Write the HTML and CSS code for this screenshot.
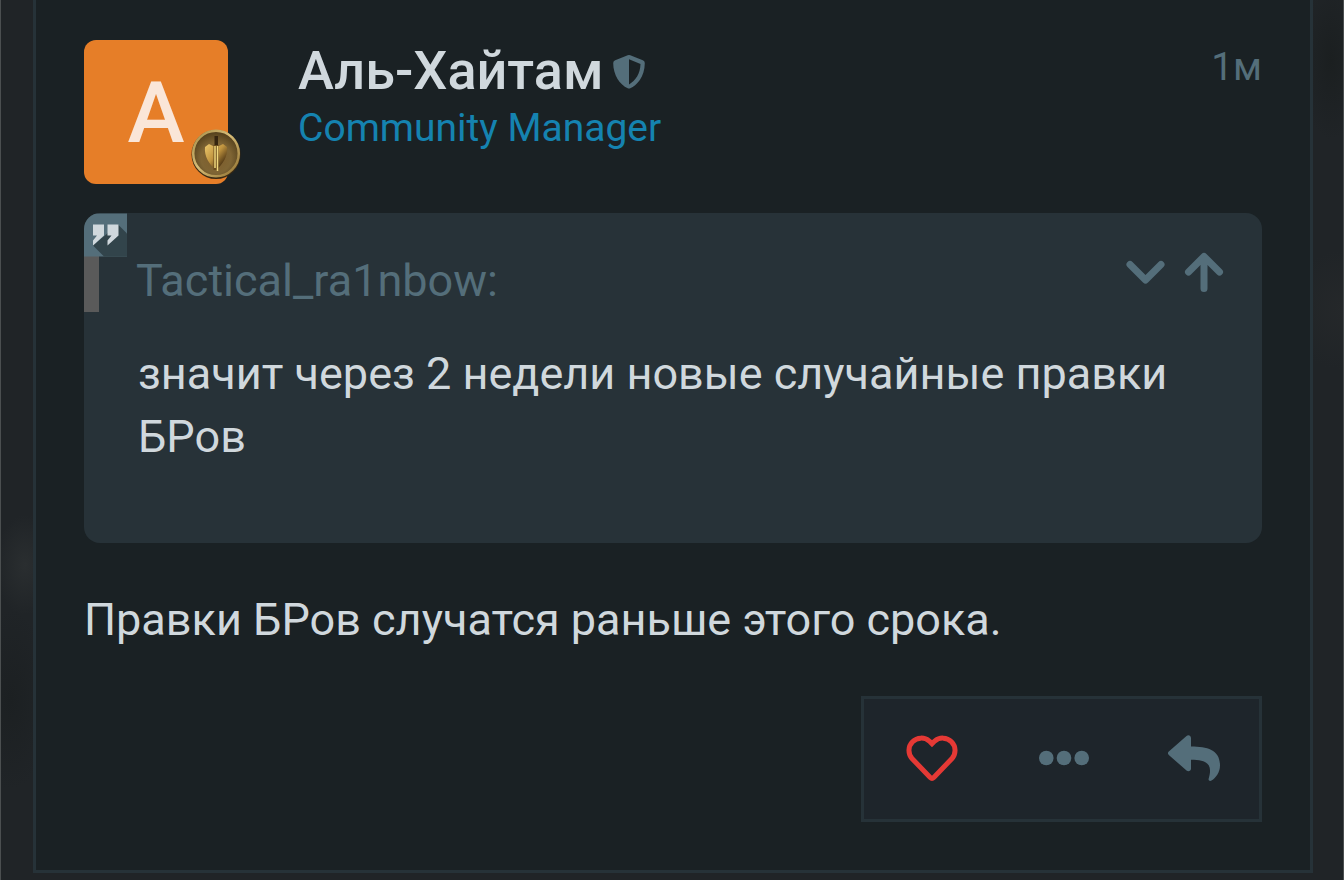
FILE: index.html
```html
<!DOCTYPE html>
<html lang="ru">
<head>
<meta charset="utf-8">
<meta name="viewport" content="width=device-width, initial-scale=1">
<title>Аль-Хайтам</title>
<link rel="stylesheet" href="styles.css">
</head>
<body>
<main class="page">
  <article class="post">
    <header class="post-header">
      <div class="avatar">
        <span class="avatar-letter">A</span>
        <svg class="avatar-badge" viewBox="0 0 50 50" aria-hidden="true">
          <defs>
            <linearGradient id="rim" x1="0" y1="0" x2="1" y2="1">
              <stop offset="0" stop-color="#a58c45"/>
              <stop offset=".45" stop-color="#d6bd78"/>
              <stop offset="1" stop-color="#8f6f2e"/>
            </linearGradient>
            <radialGradient id="coin" cx=".5" cy=".6" r=".55">
              <stop offset="0" stop-color="#7d5c2a"/>
              <stop offset=".6" stop-color="#7f6534"/>
              <stop offset="1" stop-color="#57431e"/>
            </radialGradient>
            <linearGradient id="crest" x1="0" y1="0" x2="1" y2="1">
              <stop offset="0" stop-color="#edc96c"/>
              <stop offset=".45" stop-color="#c0943f"/>
              <stop offset=".8" stop-color="#4a3212"/>
            </linearGradient>
          </defs>
          <circle cx="25" cy="25.500" r="24.500" fill="#3a2a13"/>
          <circle cx="25" cy="24.500" r="22.800" fill="url(#coin)" stroke="url(#rim)" stroke-width="2.500"/>
          <path d="M23.500 7h3.500v9h-3.500z" fill="#34240f"/>
          <path d="M14 18 18 15 22 17H28L32 15 36 18C37 27 32 35 25 41 18 35 13 27 14 18z" fill="url(#crest)"/>
          <path d="M25 16v25" stroke="#6a4b1c" stroke-width="5"/>
          <path d="M24 17v22M26.500 17v25" stroke="#f0d77d" stroke-width="1.500"/>
        </svg>
      </div>
      <div class="author">
        <h1 class="author-name">Аль-Хайтам
          <svg class="shield" viewBox="0 0 32 36" role="img" aria-label="Модератор">
            <path fill-rule="evenodd" d="M14.700 2.200 2.200 7.300A3 3 0 0 0 .2 10C.2 22 7 32 14.700 35.200q1.300.5 2.600 0C23.500 32.700 31.800 24 31.800 10a3 3 0 0 0-2-2.700L17.300 2.200q-1.300-.5-2.600 0zM16 6.300l11.500 4.800C27.200 20.500 22.600 28 16 31.400z"/>
          </svg>
        </h1>
        <p class="author-role">Community Manager</p>
      </div>
      <time class="post-time">1м</time>
    </header>

    <blockquote class="quote">
      <svg class="quote-mark" viewBox="0 0 43 43" aria-hidden="true">
        <path class="mark-bg" d="M0 0h43v43H0z"/>
        <path class="mark-shade" d="M34 11l9 9v23H20L9 32z"/>
        <path class="mark-glyph" d="M9 11h11v11L9 32v-5l4-5H9zM23.500 11h11v11l-11 10v-5l4-5h-4z"/>
      </svg>
      <div class="quote-title">
        <span class="quote-author">Tactical_ra1nbow:</span>
        <div class="quote-controls">
          <button class="icon-button" type="button" aria-label="Развернуть цитату">
            <svg class="icon-small" viewBox="0 0 40 40"><path class="stroke" d="M5 12.500 20.500 28l15.500-15.500"/></svg>
          </button>
          <button class="icon-button" type="button" aria-label="К цитируемому сообщению">
            <svg class="icon-small" viewBox="0 0 40 40"><path class="stroke" d="M4.500 20 20 4.500 35.500 20M20 5v31.500"/></svg>
          </button>
        </div>
      </div>
      <p class="quote-text">значит через 2 недели новые случайные правки БРов</p>
    </blockquote>

    <p class="post-text">Правки БРов случатся раньше этого срока.</p>

    <nav class="actions" aria-label="Действия">
      <button class="action" type="button" aria-label="Нравится">
        <svg class="icon heart" viewBox="0 0 52 52"><path d="M26 10.800 23.300 8.100A12.300 12.300 0 0 0 6 25.500L24.200 44.500Q26 46.200 27.800 44.500L46 25.500A12.300 12.300 0 0 0 28.700 8.100Z"/></svg>
      </button>
      <button class="action" type="button" aria-label="Ещё">
        <svg class="icon" viewBox="0 0 52 52"><circle cx="9.300" cy="25" r="7.300"/><circle cx="27" cy="25" r="7.300"/><circle cx="44.700" cy="25" r="7.300"/></svg>
      </button>
      <button class="action" type="button" aria-label="Ответить">
        <svg class="icon" viewBox="0 0 52 52"><path d="M.8 18.500 18.500 2.900C20.300 1.300 23 2.500 23 5V13.500C40 13.600 52 17 52 32.500C52 39 48 45 43.500 47.500C42 48.500 40 47.500 40.700 45.500C45 31 39 27 23 26.800V35.500C23 38 20.300 39.200 18.500 37.500L.8 22Q-1 20.300.8 18.500Z"/></svg>
      </button>
    </nav>
  </article>
</main>
</body>
</html>
```
FILE: styles.css
```css
* {
  box-sizing: border-box;
}

body {
  margin: 0;
  background: #202427;
  color: #d0d8dd;
  font-family: Roboto, "Noto Sans", sans-serif;
  font-size: 45px;
  line-height: 63px;
}

h1,
p,
blockquote {
  margin: 0;
}

button {
  border: 0;
  padding: 0;
  background: none;
  color: inherit;
  cursor: pointer;
}

svg {
  display: block;
}

.page {
  min-height: 100vh;
  padding: 0 30px 7px 32px;
  border: solid #4b4f50;
  border-width: 0 1px;
  background:
    radial-gradient(ellipse 30px 50px at 24px 565px, #2a2e30, transparent),
    radial-gradient(ellipse 40px 90px at 10px 700px, #1c2022, transparent),
    radial-gradient(ellipse 30px 80px at 1330px 60px, #1b1f20, transparent),
    radial-gradient(ellipse 60px 60px at 1344px 310px, #25282a, transparent),
    #202427;
}

.post {
  padding: 40px 48px 48px;
  border: 3px solid #263238;
  border-top: 0;
  background: #1a2124;
}

.post-header {
  display: flex;
  align-items: flex-start;
  gap: 70px;
}

.avatar {
  position: relative;
  flex: none;
  width: 144px;
  height: 144px;
  border-radius: 12px;
  background: #e67e28;
  color: #fae6d8;
  font-size: 86px;
  font-weight: 500;
  line-height: 146px;
  text-align: center;
}

.avatar-badge {
  position: absolute;
  right: -13px;
  bottom: 5px;
  width: 50px;
  height: 50px;
}

.author {
  flex: 1;
}

.author-name {
  display: flex;
  align-items: center;
  gap: 10px;
  font-size: 54px;
  font-weight: 500;
  line-height: 62px;
}

.shield {
  width: 32px;
  height: 36px;
  fill: #546e7a;
}

.author-role {
  color: #1583b0;
  font-size: 39px;
  line-height: 52px;
}

.post-time {
  color: #546e7a;
  font-size: 39px;
  line-height: 54px;
}

.quote {
  position: relative;
  margin-top: 29px;
  padding: 36px 38px 75px 0;
  border-radius: 16px;
  background: #273238;
  overflow: hidden;
}

.quote-mark {
  position: absolute;
  top: 0;
  left: 0;
  width: 43px;
  height: 44px;
}

.mark-bg {
  fill: #546e7a;
}

.mark-shade {
  fill: #32444b;
}

.mark-glyph {
  fill: #d0d8dd;
}

.quote-title {
  display: flex;
  justify-content: space-between;
  padding-left: 37px;
  border-left: 15px solid #5a5a5a;
  color: #546e7a;
}

.quote-controls {
  display: flex;
  align-items: flex-start;
  gap: 19px;
  padding-top: 3px;
}

.icon-small {
  width: 40px;
  height: 40px;
}

.stroke {
  fill: none;
  stroke: #546e7a;
  stroke-width: 7;
  stroke-linecap: round;
  stroke-linejoin: round;
}

.quote-text {
  margin-top: 30px;
  padding-left: 54px;
}

.post-text {
  margin-top: 45px;
}

.actions {
  display: flex;
  width: fit-content;
  margin: 45px 0 0 auto;
  padding-left: 2px;
  border: 3px solid #263238;
  background: #1e252b;
}

.action {
  display: flex;
  align-items: center;
  justify-content: center;
  width: 131px;
  height: 120px;
}

.icon {
  width: 52px;
  height: 52px;
  fill: #546e7a;
}

.heart {
  fill: none;
  stroke: #e53935;
  stroke-width: 5;
}
```
